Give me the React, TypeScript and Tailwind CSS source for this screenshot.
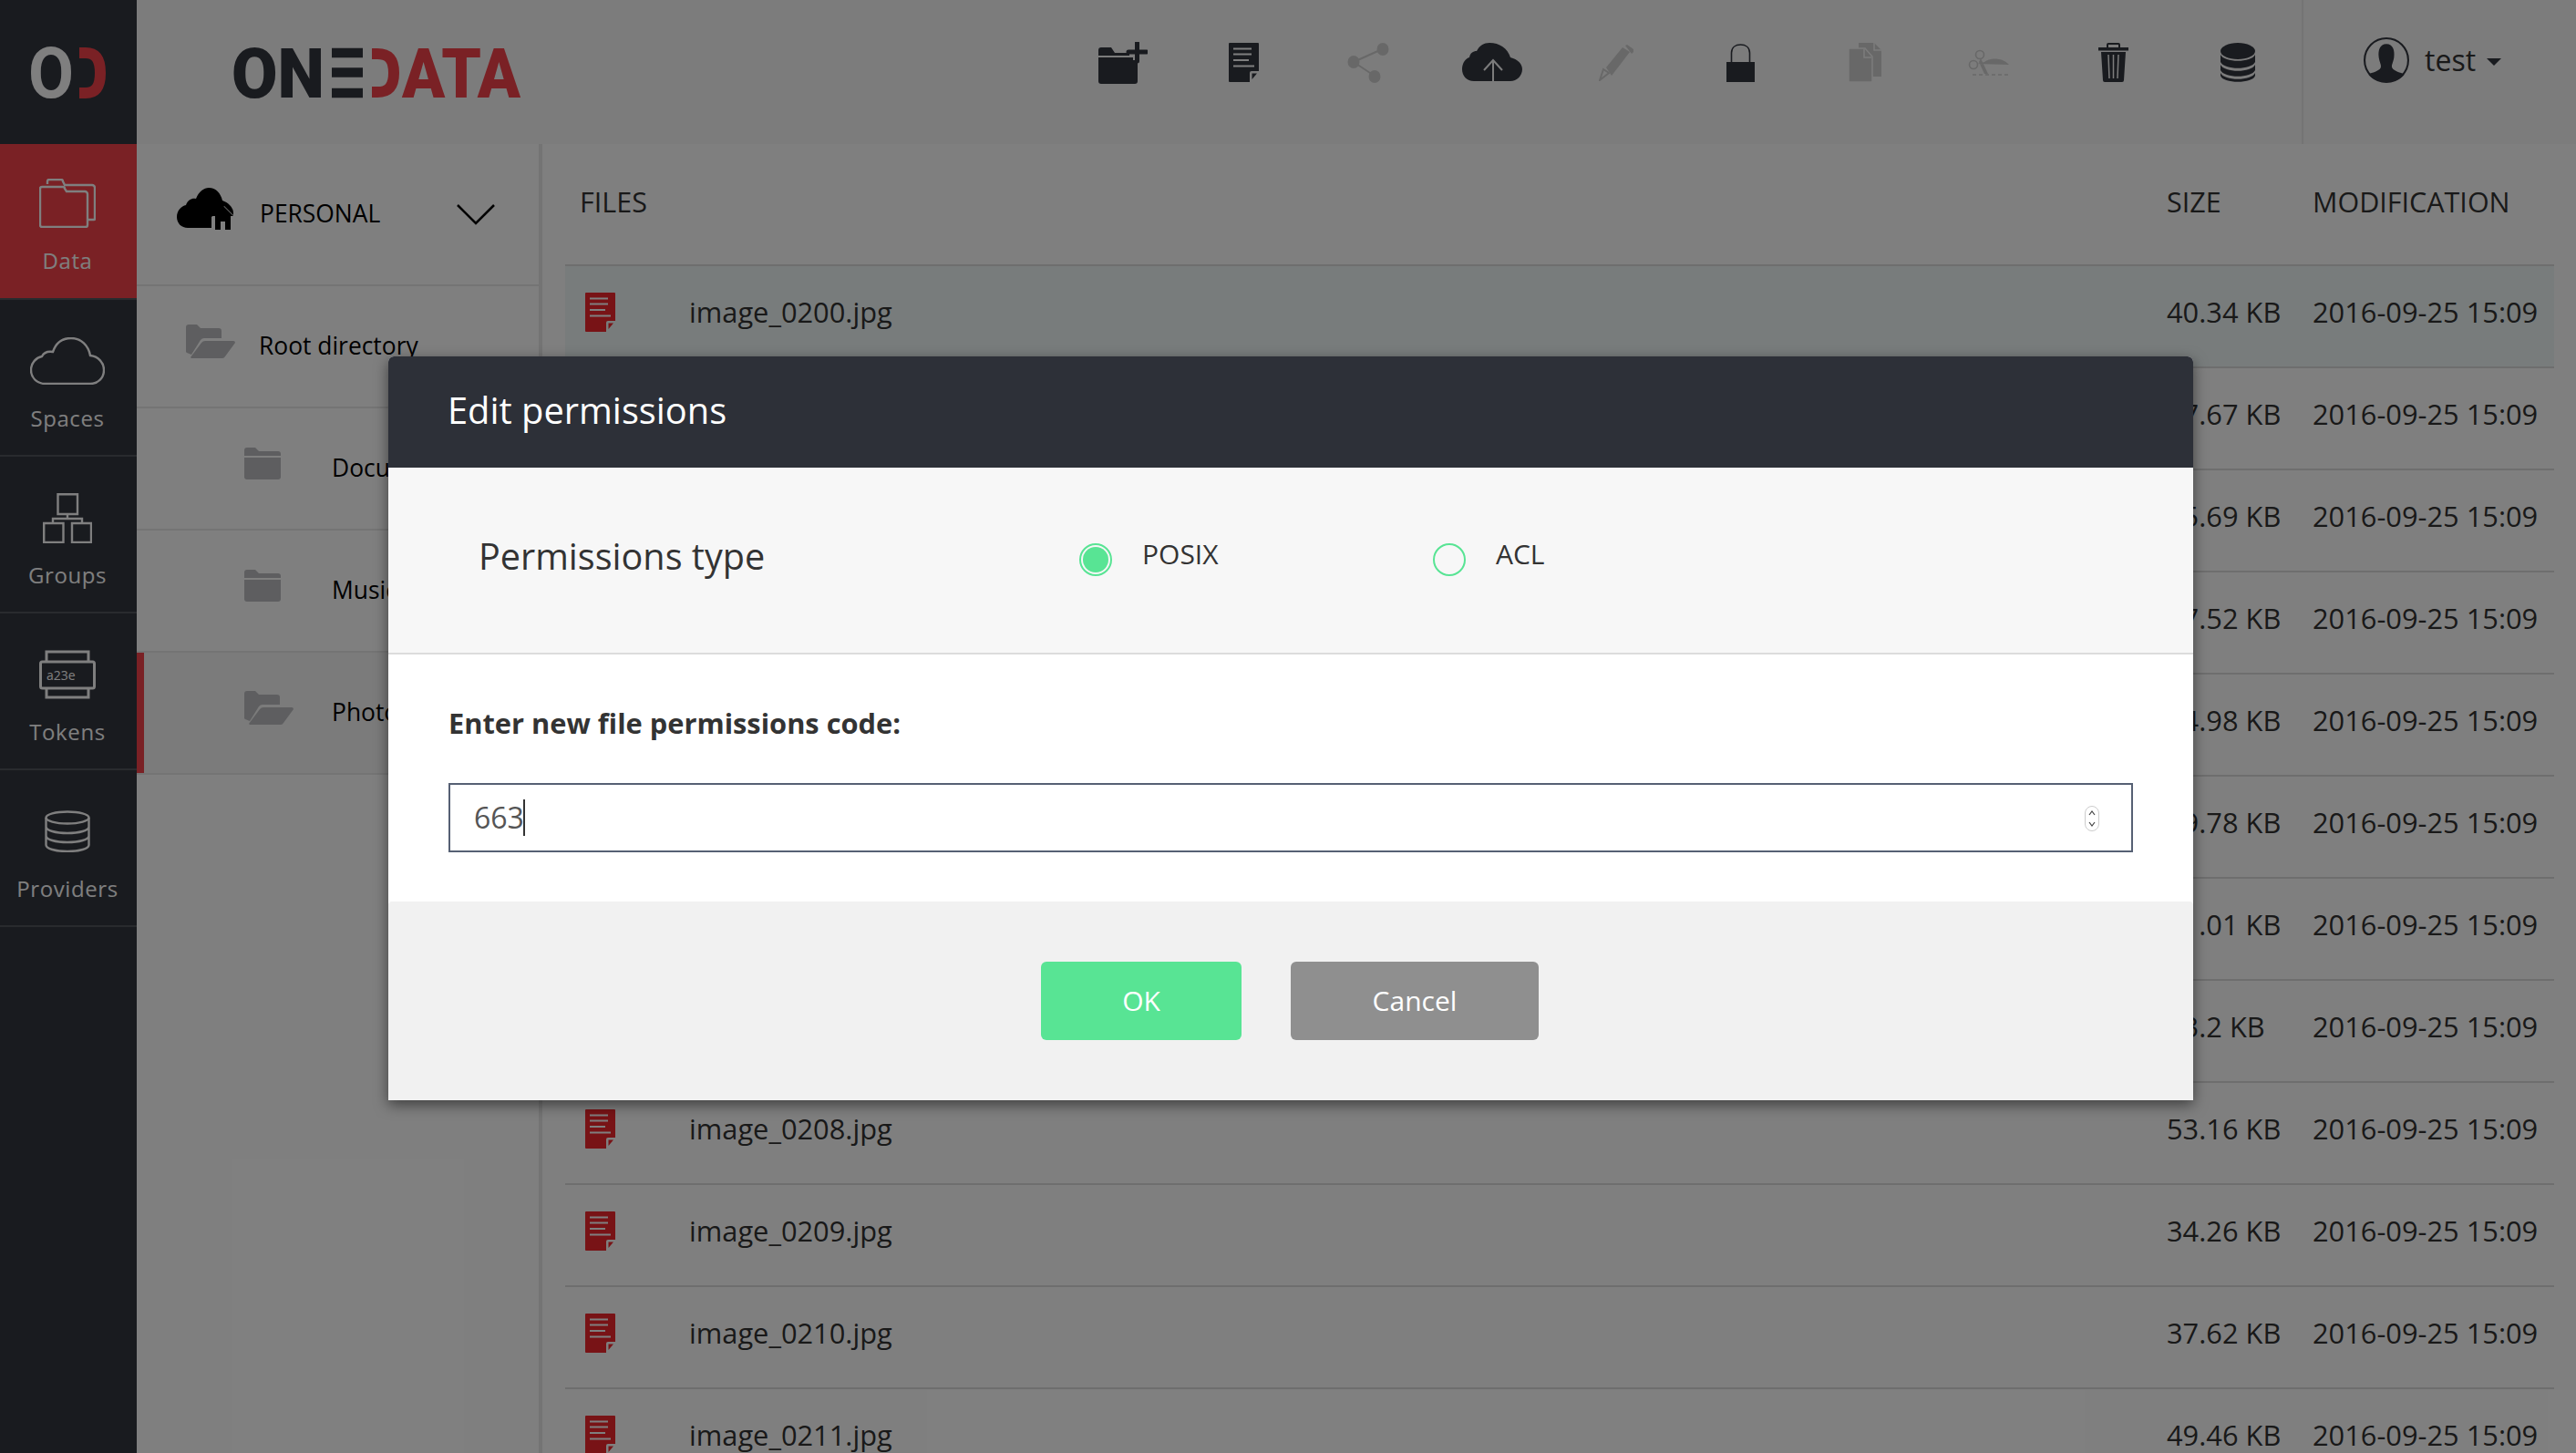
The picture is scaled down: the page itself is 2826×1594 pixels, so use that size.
import type { ReactNode } from 'react';

const files = [
    ['image_0200.jpg', '40.34 KB'],
    ['image_0201.jpg', '37.67 KB'],
    ['image_0202.jpg', '45.69 KB'],
    ['image_0203.jpg', '47.52 KB'],
    ['image_0204.jpg', '34.98 KB'],
    ['image_0205.jpg', '39.78 KB'],
    ['image_0206.jpg', '41.01 KB'],
    ['image_0207.jpg', '43.2 KB'],
    ['image_0208.jpg', '53.16 KB'],
    ['image_0209.jpg', '34.26 KB'],
    ['image_0210.jpg', '37.62 KB'],
    ['image_0211.jpg', '49.46 KB'],
];

function DocIcon({ color, className }: { color: string; className?: string }) {
    return (
        <svg viewBox="0 0 33 43" className={className}>
            <path d="M1 0H32a1 1 0 0 1 1 1V31H25a2 2 0 0 0-2 2V43H1a1 1 0 0 1-1-1V1a1 1 0 0 1 1-1Z" fill={color} />
            <path d="M5 6.500H25M5 12.500H25M5 19H22M5 25.500H28" stroke="#fff" strokeWidth="2" />
            <path d="M25.500 33.500H31L25.500 40Z" fill={color} />
        </svg>
    );
}

function FolderClosed({ className }: { className?: string }) {
    return (
        <svg viewBox="0 0 40 35" className={className}>
            <path d="M3 0H12L16 4H37a3 3 0 0 1 3 3V9H0V3a3 3 0 0 1 3-3Z" fill="#bcbdc0" />
            <path d="M0 11H40V32a3 3 0 0 1-3 3H3a3 3 0 0 1-3-3Z" fill="#bcbdc0" />
        </svg>
    );
}

function FolderOpen({ className }: { className?: string }) {
    return (
        <svg viewBox="0 0 54 37" className={className}>
            <path d="M3 0H12L16 4H36a3 3 0 0 1 3 3V15H20a5 5 0 0 0-4 2L6 33 1 31a2 2 0 0 1-1-2V3a3 3 0 0 1 3-3Z" fill="#bcbdc0" />
            <path d="M21 18H52a2 2 0 0 1 2 2L43 35a4 4 0 0 1-3 2H7a2 2 0 0 1-2-1L17 20a5 5 0 0 1 4-2Z" fill="#bcbdc0" />
        </svg>
    );
}

const stroke = { fill: 'none', stroke: '#fff', strokeWidth: 2.4 };

function NavData() {
    return (
        <svg viewBox="0 0 62 54" className="h-[54px] w-[62px]" {...stroke}>
            <path d="M9 6V3a2 2 0 0 1 2-2H24a2 2 0 0 1 2 2L28 7H58a3 3 0 0 1 3 3V44a1 1 0 0 1-1 1H54" />
            <path d="M1 11a2 2 0 0 1 2-2H26a2 2 0 0 1 2 2L30 14H50a3 3 0 0 1 3 3V51a2 2 0 0 1-2 2H3a2 2 0 0 1-2-2Z" />
        </svg>
    );
}

function NavSpaces() {
    return (
        <svg viewBox="0 0 82 52" className="h-[52px] w-[82px]" {...stroke}>
            <path d="M17 51C7 51 1 44 1 36C1 28 7 22 13 21C15 17 19 15 25 16C28 7 34 1 45 1C56 1 64 9 66 20C75 21 81 28 81 36C81 45 74 51 66 51Z" />
        </svg>
    );
}

function NavGroups() {
    return (
        <svg viewBox="0 0 54 55" className="h-[55px] w-[54px]" {...stroke}>
            <path d="M16.500 1.200H38V23H16.500ZM1.200 33H22.500V54H1.200ZM32 33H53V54H32ZM27 23V28M11 33V28H43V33" />
        </svg>
    );
}

function NavTokens() {
    return (
        <svg viewBox="0 0 62 54" className="h-[54px] w-[62px]" {...stroke}>
            <path d="M8 12V2H54V12M8 42V52H54V42" strokeWidth="3" />
            <rect x="1.500" y="13" width="59" height="29" rx="2" strokeWidth="3" />
            <text x="8" y="33" fontSize="14" fill="#fff" stroke="none" fontFamily="Open Sans">a23e</text>
        </svg>
    );
}

function NavProviders() {
    return (
        <svg viewBox="0 0 50 46" className="h-[46px] w-[50px]" {...stroke}>
            <ellipse cx="25" cy="8" rx="23.500" ry="6.500" />
            <path d="M1.500 8V38C1.500 42 12 45 25 45S48.500 42 48.500 38V8M1.500 18C1.500 22 12 25 25 25S48.500 22 48.500 18M1.500 28C1.500 32 12 35 25 35S48.500 32 48.500 28" />
        </svg>
    );
}

const dark = '#33363f';
const muted = '#d0d0d0';

const toolbar: ReactNode[] = [
    <svg key="folder" viewBox="0 0 54 46" className="ml-[8px] h-[46px] w-[54px]">
        <path d="M3 6H14L18 12H42V15H0V9a3 3 0 0 1 3-3Z" fill={dark} />
        <path d="M0 17H43V43a3 3 0 0 1-3 3H3a3 3 0 0 1-3-3Z" fill={dark} />
        <path d="M42.500 2V20M34 11H53" stroke="#f8f8f8" strokeWidth="9" />
        <path d="M42.500 1V21M33 11H53" stroke={dark} strokeWidth="5" strokeLinecap="round" />
    </svg>,
    <DocIcon key="doc" color={dark} className="h-[43px] w-[33px]" />,
    <svg key="share" viewBox="0 0 46 44" className="h-[44px] w-[46px]">
        <path d="M38 7L7 21L31 37" fill="none" stroke={muted} strokeWidth="2" />
        <ellipse cx="39" cy="7" rx="6.500" ry="7" fill={muted} />
        <ellipse cx="7" cy="21" rx="6.500" ry="7" fill={muted} />
        <ellipse cx="30" cy="37" rx="6.500" ry="7" fill={muted} />
    </svg>,
    <svg key="cloud" viewBox="0 0 66 43" className="h-[43px] w-[66px]">
        <path d="M13 42C5 42 0 36 0 29C0 22 4 17 8 16C9 11 12 9 16 9C19 3 24 0 30 0C41 0 50 6 53 16C61 18 66 23 66 29C66 36 60 42 53 42Z" fill={dark} />
        <path d="M34 42V20M24 30L34 19L44 30" fill="none" stroke="#f8f8f8" strokeWidth="2" />
    </svg>,
    <svg key="pencil" viewBox="0 0 38 40" className="h-[40px] w-[38px]">
        <path d="M1 39L5 27L11 31Z" fill="none" stroke={muted} strokeWidth="2" />
        <path d="M8 25L26 3L34 8L14 34Z" fill={muted} />
        <path d="M29 1L31 0L38 5V8L36 10Z" fill={muted} />
    </svg>,
    <svg key="lock" viewBox="0 0 31 42" className="h-[42px] w-[31px]">
        <path d="M5.500 20V10C5.500 4 10 1 15.500 1S25.500 4 25.500 10V20" fill="none" stroke={dark} strokeWidth="1.600" />
        <rect x="0" y="20" width="31" height="22" fill={dark} />
    </svg>,
    <svg key="copy" viewBox="0 0 36 43" className="h-[43px] w-[36px]">
        <path d="M11 0H28L36 8V37H11Z" fill={muted} />
        <path d="M28 0V8H36" fill="none" stroke="#f8f8f8" strokeWidth="1.500" />
        <path d="M0 6H18L26 15V43H0Z" fill={muted} stroke="#f8f8f8" strokeWidth="1.500" />
        <path d="M17 7V16H25" fill="none" stroke="#f8f8f8" strokeWidth="1.500" />
    </svg>,
    <svg key="scissors" viewBox="0 0 46 30" className="h-[30px] w-[46px]">
        <circle cx="13" cy="6" r="4.500" fill="none" stroke={muted} strokeWidth="1.600" />
        <circle cx="6" cy="17" r="4.500" fill="none" stroke={muted} strokeWidth="1.600" />
        <path d="M14 10L22 27H18L12 14ZM10 16L18 14C24 9 38 9 45 17Z" fill={muted} />
        <path d="M5 28H46" stroke={muted} strokeWidth="1.500" strokeDasharray="4 3" />
    </svg>,
    <svg key="trash" viewBox="0 0 33 43" className="h-[43px] w-[33px]">
        <path d="M10 5V2a1 1 0 0 1 1-1H22a1 1 0 0 1 1 1V5" fill="none" stroke={dark} strokeWidth="2" />
        <rect x="0" y="5" width="33" height="3.500" fill={dark} />
        <path d="M3 10H30L28 41a2 2 0 0 1-2 2H7a2 2 0 0 1-2-2Z" fill={dark} />
        <path d="M11 13L12 39M16.500 13V39M22 13L21 39" stroke="#f8f8f8" strokeWidth="1.500" />
    </svg>,
    <svg key="db" viewBox="0 0 38 43" className="h-[43px] w-[38px]">
        <ellipse cx="19" cy="9" rx="19" ry="9" fill={dark} />
        <path d="M0 13C4 22 34 22 38 13V21C34 30 4 30 0 21Z" fill={dark} />
        <path d="M0 24C4 33 34 33 38 24V30C34 39 4 39 0 30Z" fill={dark} />
        <path d="M0 33C4 42 34 42 38 33V36C36 45 2 45 0 36Z" fill={dark} />
    </svg>,
];

const navItems = [
    { label: 'Data', icon: <NavData />, active: true },
    { label: 'Spaces', icon: <NavSpaces /> },
    { label: 'Groups', icon: <NavGroups /> },
    { label: 'Tokens', icon: <NavTokens /> },
    { label: 'Providers', icon: <NavProviders /> },
];

function Sidebar() {
    return (
        <aside className="flex w-[150px] shrink-0 flex-col bg-[#33363f]">
            <div className="flex h-[158px] items-start justify-center pt-[52px]">
                <svg viewBox="0 0 84 56" className="h-[56px] w-[84px] overflow-visible">
                    <text x="-2" y="55" fontFamily="Roboto" fontWeight="700" fontSize="78" fill="#fff" textLength="50" lengthAdjust="spacingAndGlyphs">O</text>
                    <path d="M54 6H61C72 6 77 13 77 28S72 50 61 50H54" fill="none" stroke="#f4434a" strokeWidth="12" />
                </svg>
            </div>
            {navItems.map((item) => (
                <div
                    key={item.label}
                    className={`flex flex-col items-center border-b-2 border-[#53565c] pr-[2px] text-white ${item.active ? 'h-[171px] bg-[#f4434a] pt-[35px]' : 'h-[172px] pt-[37px]'}`}
                >
                    <div className="flex h-[60px] items-center justify-center">{item.icon}</div>
                    <span className="mt-[16px] text-[24px] font-medium leading-[34px] tracking-[0.6px]">{item.label}</span>
                </div>
            ))}
        </aside>
    );
}

function TreeRow({ icon, label, indent, active }: { icon: ReactNode; label: string; indent: boolean; active?: boolean }) {
    return (
        <div className={`relative flex h-[134px] items-center border-b-2 border-[#e8e8e8] text-[26.4px] text-black ${active ? 'bg-[#f6f6f6]' : ''}`}>
            {active && <div className="absolute inset-y-0 left-0 w-[8px] bg-[#f4434a]" />}
            <div className={`mb-[12px] flex shrink-0 ${indent ? 'w-[214px] pl-[118px]' : 'w-[134px] pl-[54px]'}`}>{icon}</div>
            <span>{label}</span>
        </div>
    );
}

function TreePanel() {
    return (
        <div className="w-[445px] shrink-0 border-r-4 border-[#e8e8e8]">
            <div className="flex h-[156px] items-center border-b-2 border-[#e8e8e8] pl-[44px] pr-[48px]">
                <svg viewBox="0 0 62 48" className="mb-[15px] h-[48px] w-[62px]">
                    <path d="M12 46C5 46 0 41 0 34C0 27 5 22 10 21C12 15 17 13 21 14C24 6 30 2 35 2C43 2 48 8 50 16C56 18 62 23 62 30V46Z" fill="#000" />
                    <path d="M38 34L52 22L64 34V48H38Z" fill="#fff" />
                    <path d="M38 33L51 22L62 33H59V48H53V39H48V48H42V33Z" fill="#000" />
                </svg>
                <span className="ml-[29px] flex-1 text-[26.4px] text-black">PERSONAL</span>
                <svg viewBox="0 0 42 24" className="h-[24px] w-[42px]">
                    <path d="M1 2L21 22L41 2" fill="none" stroke="#000" strokeWidth="2.500" />
                </svg>
            </div>
            <TreeRow icon={<FolderOpen className="h-[37px] w-[54px]" />} label="Root directory" indent={false} />
            <TreeRow icon={<FolderClosed className="h-[35px] w-[40px]" />} label="Documents" indent />
            <TreeRow icon={<FolderClosed className="h-[35px] w-[40px]" />} label="Music" indent />
            <TreeRow icon={<FolderOpen className="h-[37px] w-[54px]" />} label="Photos" indent active />
        </div>
    );
}

function FileTable() {
    return (
        <div className="flex-1 pl-[25px] pr-[24px] text-[#333]">
            <div className="flex h-[134px] items-center border-b-2 border-[#ddd] pb-[4px] text-[30.500px]">
                <span className="flex-1 pl-[16px]">FILES</span>
                <span className="w-[160px]">SIZE</span>
                <span className="w-[265px]">MODIFICATION</span>
            </div>
            {files.map(([name, size], i) => (
                <div key={name} className={`flex h-[112px] items-center border-b-2 border-[#ddd] pb-[10px] text-[30.800px] ${i === 0 ? 'bg-[#f0f8f8]' : ''}`}>
                    <div className="flex w-[136px] shrink-0 pl-[22px]">
                        <DocIcon color="#f0272d" className="h-[43px] w-[33px]" />
                    </div>
                    <span className="flex-1">{name}</span>
                    <span className="w-[160px]">{size}</span>
                    <span className="w-[265px]">2016-09-25 15:09</span>
                </div>
            ))}
        </div>
    );
}

function Radio({ checked }: { checked?: boolean }) {
    return (
        <span className="mt-[6px] flex h-[36px] w-[36px] shrink-0 items-center justify-center rounded-full border-2 border-[#58e494]">
            {checked && <span className="h-[28px] w-[28px] rounded-full bg-[#58e494]" />}
        </span>
    );
}

function PermissionsModal() {
    return (
        <div className="absolute inset-0 bg-black/50 pl-[426px] pt-[391px]">
            <div className="w-[1980px] overflow-hidden rounded-t-[6px] bg-white shadow-[0_5px_15px_rgba(0,0,0,0.5)]">
                <div className="flex h-[122px] items-center bg-[#2d3038] pb-[4px] pl-[65px] text-[39.800px] text-white">
                    Edit permissions
                </div>
                <div className="flex h-[205px] items-center border-b-2 border-[#dcdcdc] bg-[#f7f7f7] pb-[8px] pl-[99px] text-[#333]">
                    <span className="w-[659px] text-[39.600px]">Permissions type</span>
                    <div className="flex w-[388px] items-center gap-[33px]">
                        <Radio checked />
                        <span className="mb-[6px] text-[30px]">POSIX</span>
                    </div>
                    <div className="flex items-center gap-[33px]">
                        <Radio />
                        <span className="mb-[6px] text-[30px]">ACL</span>
                    </div>
                </div>
                <div className="px-[66px] pb-[54px] pt-[55px]">
                    <div className="mb-[46px] text-[30.800px] font-bold leading-[40px] text-[#333]">Enter new file permissions code:</div>
                    <div className="relative flex h-[76px] items-center border-2 border-[#566074] pl-[26px] text-[32px] text-[#555]">
                        <span>663</span>
                        <span className="-ml-[1px] h-[40px] w-[2px] bg-[#333]" />
                        <div className="absolute right-[35px] top-[23px] flex h-[28px] w-[16px] flex-col items-center justify-center rounded-full border border-[#ccc] text-[#444]">
                            <svg viewBox="0 0 8 18" className="h-[18px] w-[8px]">
                                <path d="M1 5L4 1L7 5M1 13L4 17L7 13" fill="none" stroke="currentColor" strokeWidth="1.200" />
                            </svg>
                        </div>
                    </div>
                </div>
                <div className="flex h-[218px] items-center justify-center gap-[54px] rounded-t-[4px] bg-[#f1f1f1] pr-[2px] text-[30px] text-white">
                    <div className="flex h-[86px] w-[220px] items-center justify-center rounded-[6px] bg-[#58e494] pb-[2px]">OK</div>
                    <div className="flex h-[86px] w-[272px] items-center justify-center rounded-[6px] bg-[#8f8f8f] pb-[2px]">Cancel</div>
                </div>
            </div>
        </div>
    );
}

export default function App() {
    return (
        <div className="relative flex h-screen w-full overflow-hidden bg-white font-['Open_Sans',sans-serif]">
            <Sidebar />
            <div className="flex min-w-0 flex-1 flex-col">
                {/* Top bar */}
                <header className="flex h-[158px] shrink-0 items-center bg-[#f8f8f8]">
                    <svg viewBox="0 0 320 60" className="ml-[104px] mt-[50px] h-[60px] w-[320px] self-start overflow-visible">
                        <text x="0" y="57" fontFamily="Roboto" fontWeight="900" fontSize="76" fill={dark} textLength="102" lengthAdjust="spacingAndGlyphs">ON</text>
                        <path d="M110 8H144M110 29.500H144M110 52H144" stroke={dark} strokeWidth="10.500" fill="none" />
                        <path d="M154 9H160C172 9 178 15 178 30S172 51 160 51H154" stroke="#f4434a" strokeWidth="12" fill="none" />
                        <text x="187" y="57" fontFamily="Roboto" fontWeight="900" fontSize="76" fill="#f4434a" textLength="130" lengthAdjust="spacingAndGlyphs">ATA</text>
                    </svg>
                    <div className="ml-auto flex h-full items-center pb-[21px] pr-[2px]">
                        {toolbar.map((icon, i) => (
                            <div key={i} className="flex w-[136.300px] justify-center">{icon}</div>
                        ))}
                    </div>
                    <div className="flex h-full w-[301px] items-center border-l-2 border-[#e8e8e8] pb-[26px] pl-[66px] text-[#333]">
                        <svg viewBox="0 0 48 48" className="h-[50px] w-[50px]">
                            <circle cx="24" cy="24" r="23" fill="#f8f8f8" stroke={dark} strokeWidth="2" />
                            <path d="M24 7C31 7 33 14 32 21C31 27 29 29 30 32C32 36 39 37 43 39C39 44 32 47 24 47S9 44 5 39C9 37 16 36 18 32C19 29 17 27 16 21C15 14 17 7 24 7Z" fill={dark} />
                        </svg>
                        <span className="ml-[17px] text-[32px]">test</span>
                        <span className="ml-[12px] mt-[4px] h-0 w-0 border-x-[8px] border-t-[8px] border-x-transparent border-t-[#33363f]" />
                    </div>
                </header>
                <div className="flex min-h-0 flex-1">
                    <TreePanel />
                    <FileTable />
                </div>
            </div>
            <PermissionsModal />
        </div>
    );
}
